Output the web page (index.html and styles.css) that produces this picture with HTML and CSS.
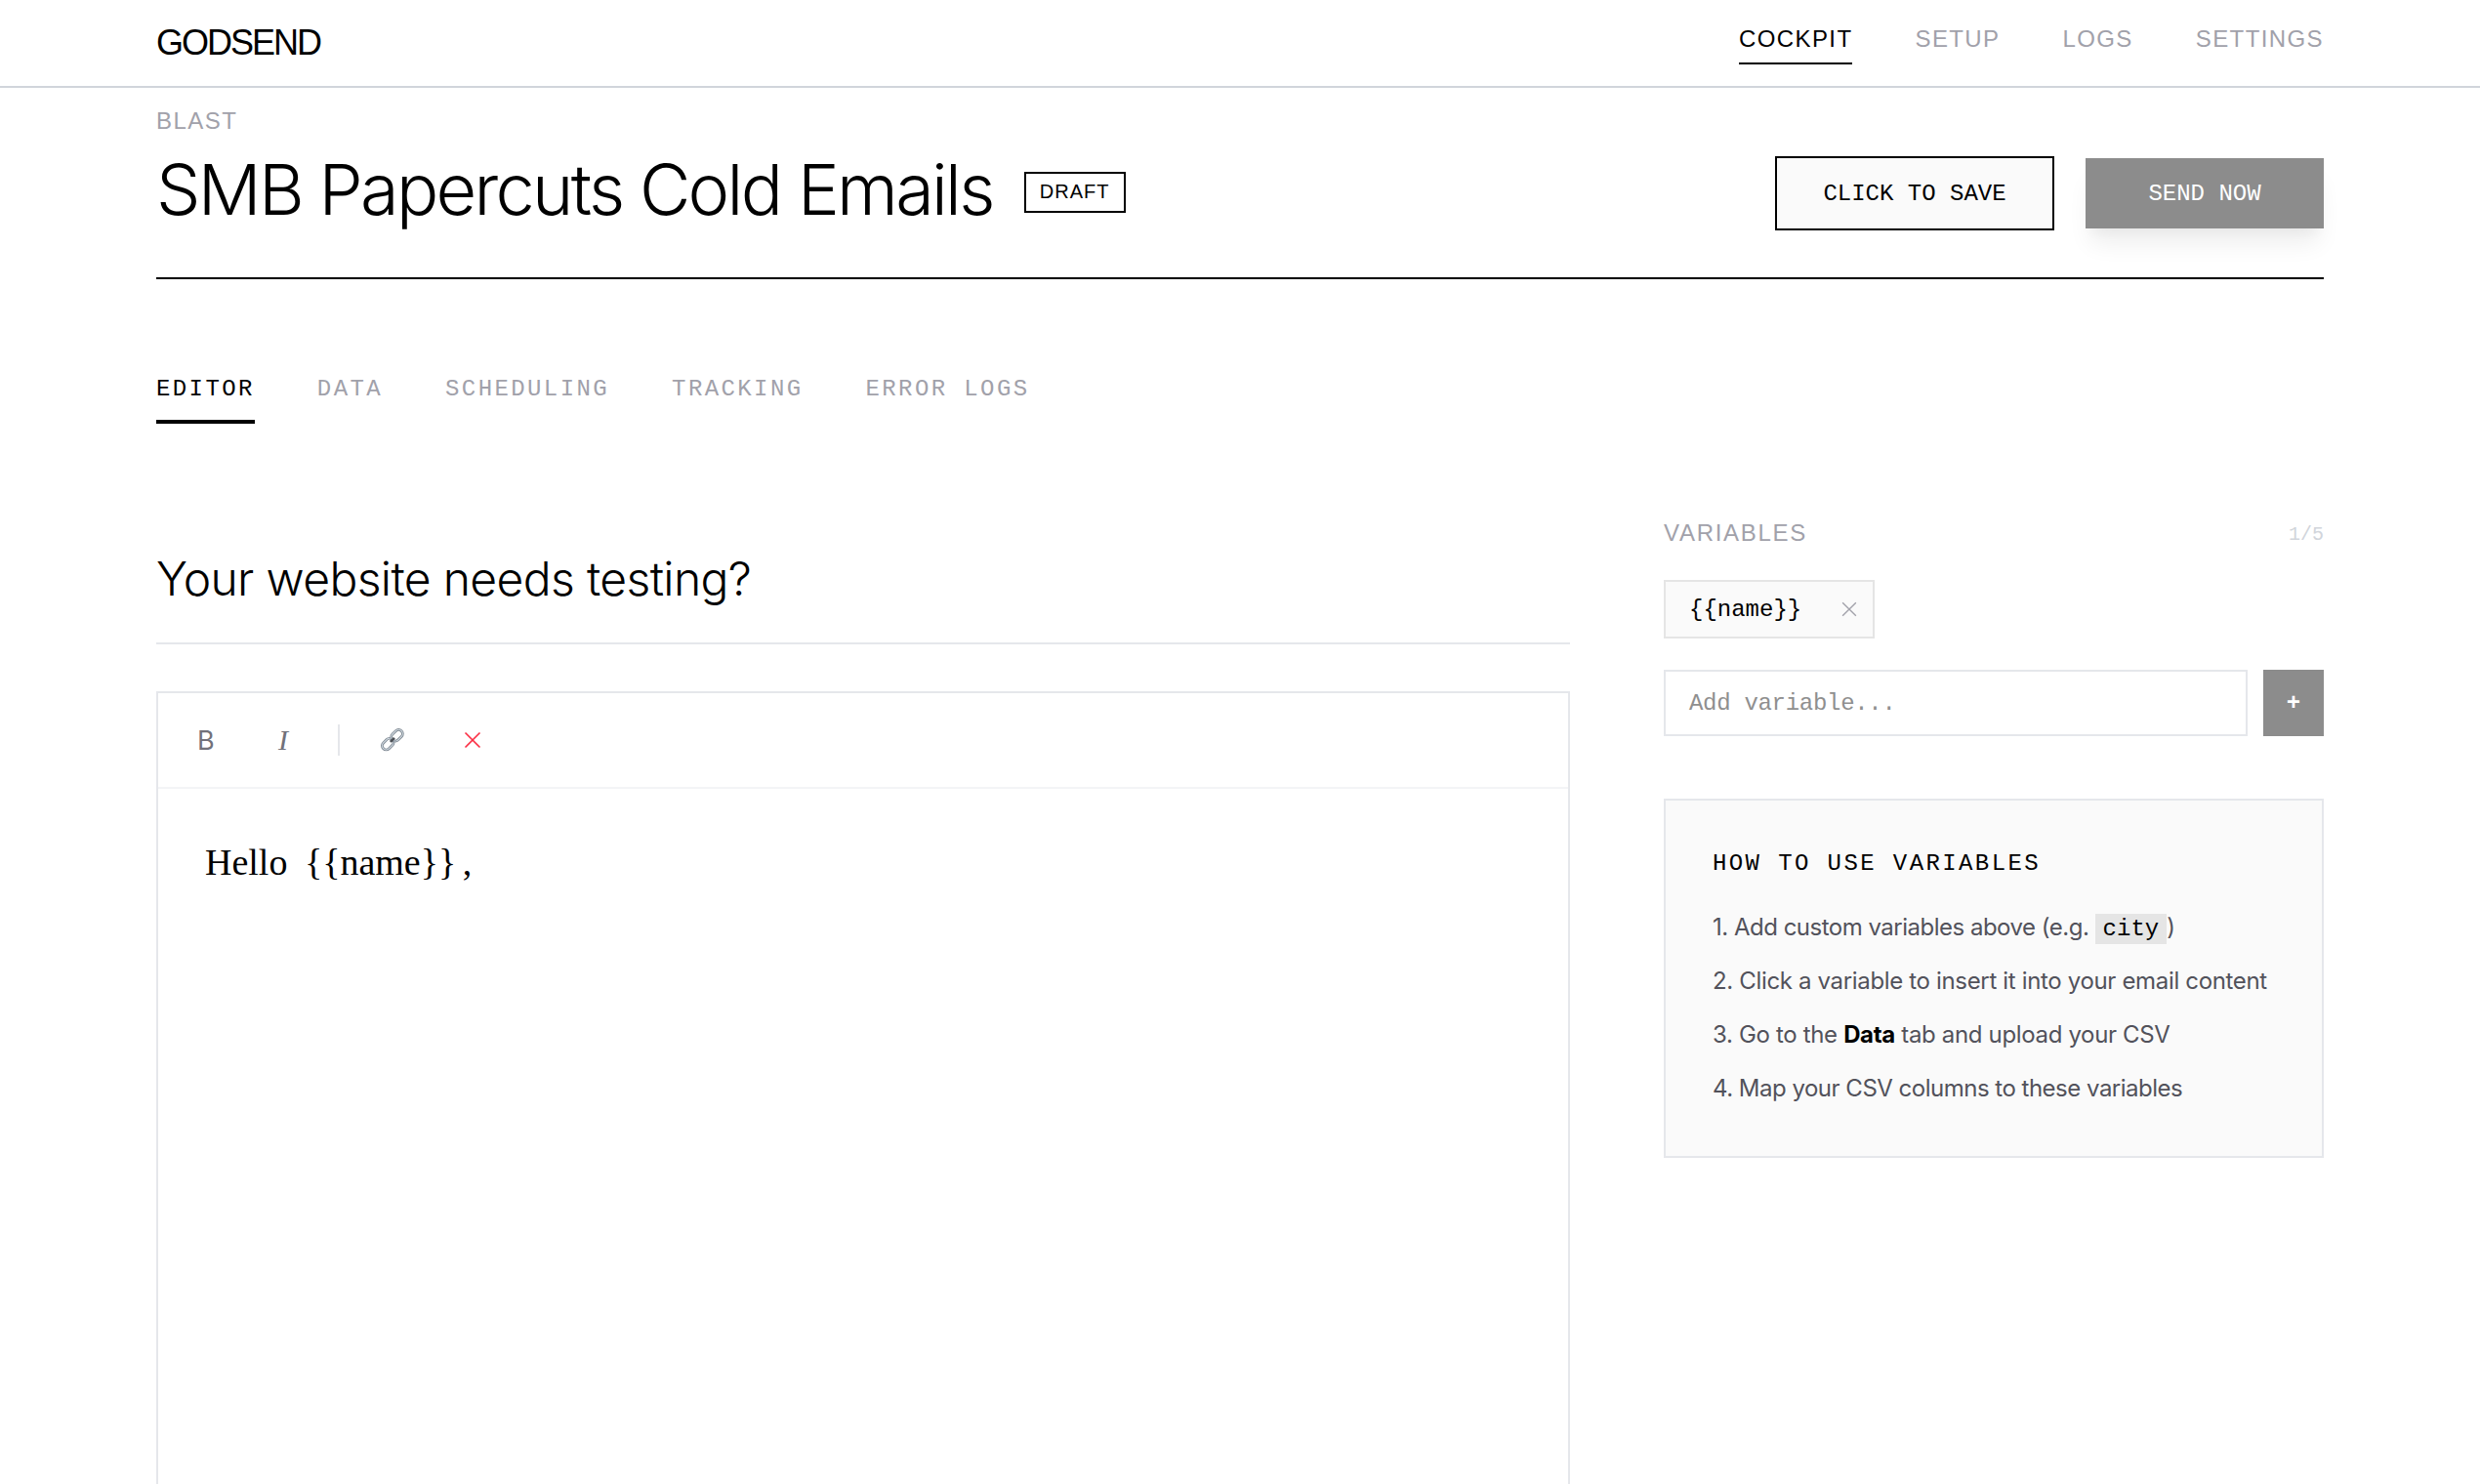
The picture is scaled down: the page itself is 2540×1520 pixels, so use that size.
FILE: index.html
```html
<!DOCTYPE html>
<html lang="en">
<head>
<meta charset="utf-8">
<title>Godsend</title>
<link rel="stylesheet" href="styles.css">
</head>
<body>
<header class="topbar">
  <div class="logo">GODSEND</div>
  <nav class="topnav">
    <a class="topnav-item is-active">COCKPIT</a>
    <a class="topnav-item">SETUP</a>
    <a class="topnav-item">LOGS</a>
    <a class="topnav-item">SETTINGS</a>
  </nav>
</header>
<main class="page">
  <section class="blast-head">
    <div class="blast-info">
      <div class="eyebrow">BLAST</div>
      <div class="title-row">
        <h1 class="title">SMB Papercuts Cold Emails</h1>
        <span class="badge">DRAFT</span>
      </div>
    </div>
    <div class="actions">
      <button class="btn btn-save">CLICK TO SAVE</button>
      <button class="btn btn-send">SEND NOW</button>
    </div>
  </section>
  <nav class="tabs">
    <a class="tab is-active">EDITOR</a>
    <a class="tab">DATA</a>
    <a class="tab">SCHEDULING</a>
    <a class="tab">TRACKING</a>
    <a class="tab">ERROR LOGS</a>
  </nav>
  <div class="columns">
    <section class="composer">
      <div class="subject">Your website needs testing?</div>
      <div class="editor">
        <div class="toolbar">
          <span class="tool tool-b">B</span>
          <span class="tool tool-i">I</span>
          <span class="tool-sep"></span>
          <svg class="icon-link" viewBox="0 0 24 24" fill="none">
            <g transform="rotate(-45 7.6 15.8)"><rect x="1.6" y="12" width="12" height="7.6" rx="3.8" stroke="#7d8791" stroke-width="2.6"/><rect x="1.6" y="12" width="12" height="7.6" rx="3.8" stroke="#d3dce3" stroke-width="1"/></g>
            <g transform="rotate(-45 16.2 7.6)"><rect x="10.2" y="3.8" width="12" height="7.6" rx="3.8" stroke="#7d8791" stroke-width="2.6"/><rect x="10.2" y="3.8" width="12" height="7.6" rx="3.8" stroke="#d3dce3" stroke-width="1"/></g>
            <path d="M10 13.8l3.8-3.8" stroke="#4b4f55" stroke-width="2.4"/>
          </svg>
          <svg class="icon-x" viewBox="0 0 18 18" fill="none"><path d="M1.5 1.5l15 15M16.5 1.5l-15 15" stroke="#fb2d43" stroke-width="1.6"/></svg>
        </div>
        <div class="body-text">Hello <span class="var">{{name}}</span> ,</div>
      </div>
    </section>
    <aside class="sidebar">
      <div class="var-head"><span class="var-label">VARIABLES</span><span class="var-count">1/5</span></div>
      <div class="chip"><span class="chip-text">{{name}}</span><svg class="chip-x" viewBox="0 0 14 14" fill="none"><path d="M1 1l12 12M13 1L1 13" stroke="#a1a1aa" stroke-width="1.2"/></svg></div>
      <div class="add-row">
        <div class="add-input">Add variable...</div>
        <button class="add-btn">+</button>
      </div>
      <div class="help">
        <h2 class="help-title">HOW TO USE VARIABLES</h2>
        <ol class="help-list">
          <li class="tight">1. Add custom variables above (e.g. <code class="code">city</code>)</li>
          <li>2. Click a variable to insert it into your email content</li>
          <li>3. Go to the <strong class="strong">Data</strong> tab and upload your CSV</li>
          <li class="tight">4. Map your CSV columns to these variables</li>
        </ol>
      </div>
    </aside>
  </div>
</main>
</body>
</html>
```
FILE: styles.css
```css
* { box-sizing: border-box; }
html, body { margin: 0; height: 1520px; overflow: hidden; background: #fff; color: #000; font-family: "Liberation Sans", sans-serif; }

.topbar { height: 90px; border-bottom: 2px solid #d1d5db; padding: 0 160px; display: flex; justify-content: space-between; }
.logo { font-size: 36px; letter-spacing: -2px; line-height: 88px; }
.topnav { display: flex; gap: 64px; }
.topnav-item { font-size: 24px; letter-spacing: 1.4px; color: #a1a1aa; height: 66px; padding-top: 26px; line-height: 28px; }
.topnav-item.is-active { color: #000; border-bottom: 2px solid #000; }

.page { padding: 0 160px; }
.blast-head { height: 196px; border-bottom: 2px solid #000; display: flex; justify-content: space-between; }
.eyebrow { font-size: 24px; letter-spacing: 1.5px; color: #a1a1aa; line-height: 26px; margin-top: 21px; }
.title-row { display: flex; align-items: center; gap: 32px; margin-top: 17px; }
.title { margin: 0; font-family: "Inter", sans-serif; font-weight: 300; font-size: 72px; line-height: 80px; letter-spacing: -2.7px; }
.badge { border: 2px solid #000; height: 42px; width: 104px; display: flex; align-items: center; justify-content: center; font-size: 20px; letter-spacing: 1px; margin-top: 5px; }
.actions { display: flex; align-items: center; gap: 32px; margin-top: 70px; height: 76px; }
.btn { font-family: "Liberation Mono", monospace; font-size: 24px; padding: 0; border: 0; border-radius: 0; }
.btn-save { width: 286px; height: 76px; border: 2px solid #000; background: #fafafa; color: #000; }
.btn-send { width: 244px; height: 72px; background: #8c8c8c; color: #fff; box-shadow: 0 20px 25px -5px rgba(0,0,0,.07), 0 10px 10px -5px rgba(0,0,0,.03); }

.tabs { display: flex; gap: 64px; margin-top: 96px; }
.tab { font-family: "Liberation Mono", monospace; font-size: 24px; letter-spacing: 2.4px; line-height: 28px; color: #a1a1aa; height: 52px; padding-top: 3px; }
.tab.is-active { color: #000; border-bottom: 4px solid #000; }

.columns { display: grid; grid-template-columns: 1448px 676px; gap: 96px; margin-top: 96px; }
.subject { font-family: "Inter", sans-serif; font-weight: 300; font-size: 48px; letter-spacing: -0.63px; line-height: 60px; height: 130px; padding-top: 33px; border-bottom: 2px solid #e5e7eb; }
.editor { margin-top: 48px; border: 2px solid #e5e7eb; height: 1200px; }
.toolbar { height: 98px; border-bottom: 2px solid #f3f4f6; display: flex; align-items: center; padding-left: 40px; }
.tool { font-family: "Inter", sans-serif; font-size: 27px; color: #71717a; }
.tool-b { width: 83px; }
.tool-i { width: 61px; font-family: "Liberation Serif", serif; font-style: italic; font-size: 30px; }
.tool-sep { width: 2px; height: 32px; background: #e5e7eb; margin-right: 41px; }
.icon-link { width: 26px; height: 26px; margin-right: 60px; }
.icon-x { width: 18px; height: 18px; }
.body-text { font-family: "Liberation Serif", serif; font-size: 38px; padding: 50px 48px 48px; line-height: 50px; }
.var { margin: 0 -3px 0 8px; }

.var-head { display: flex; justify-content: space-between; align-items: center; height: 32px; }
.var-label { font-size: 24px; letter-spacing: 1.7px; color: #a1a1aa; }
.var-count { font-family: "Liberation Mono", monospace; font-size: 20px; color: #d1d5db; margin-top: 2px; }
.chip { margin-top: 32px; width: 216px; height: 60px; border: 2px solid #e5e5e5; background: #fafafa; display: flex; align-items: center; justify-content: space-between; padding: 0 16px 0 24px; }
.chip-text { font-family: "Liberation Mono", monospace; font-size: 24px; }
.chip-x { width: 16px; height: 16px; }
.add-row { display: flex; gap: 16px; margin-top: 32px; }
.add-input { flex: 1; height: 68px; border: 2px solid #e5e7eb; font-family: "Liberation Mono", monospace; font-size: 24px; letter-spacing: -0.3px; line-height: 66px; padding-left: 24px; color: #8f8f8f; }
.add-btn { width: 62px; height: 68px; border: 0; background: #8c8c8c; color: #fff; font-size: 24px; font-weight: 700; padding: 0; font-family: "Liberation Mono", monospace; }
.help { margin-top: 64px; height: 368px; background: #fafafa; border: 2px solid #e5e7eb; padding: 51px 48px 48px; }
.help-title { margin: 0; font-family: "Liberation Mono", monospace; font-weight: 400; font-size: 24px; letter-spacing: 2.4px; line-height: 28px; }
.help-list { list-style: none; margin: 31px 0 0; padding: 0; font-family: "Inter", sans-serif; font-size: 24px; letter-spacing: -0.34px; color: #52525b; }
.help-list li { height: 55px; line-height: 40px; }
.help-list .tight { letter-spacing: -0.5px; }
.code { font-family: "Liberation Mono", monospace; font-size: 24px; letter-spacing: 0; background: #e5e5e5; color: #000; padding: 2px 8px; }
.strong { color: #000; font-weight: 700; }
```
